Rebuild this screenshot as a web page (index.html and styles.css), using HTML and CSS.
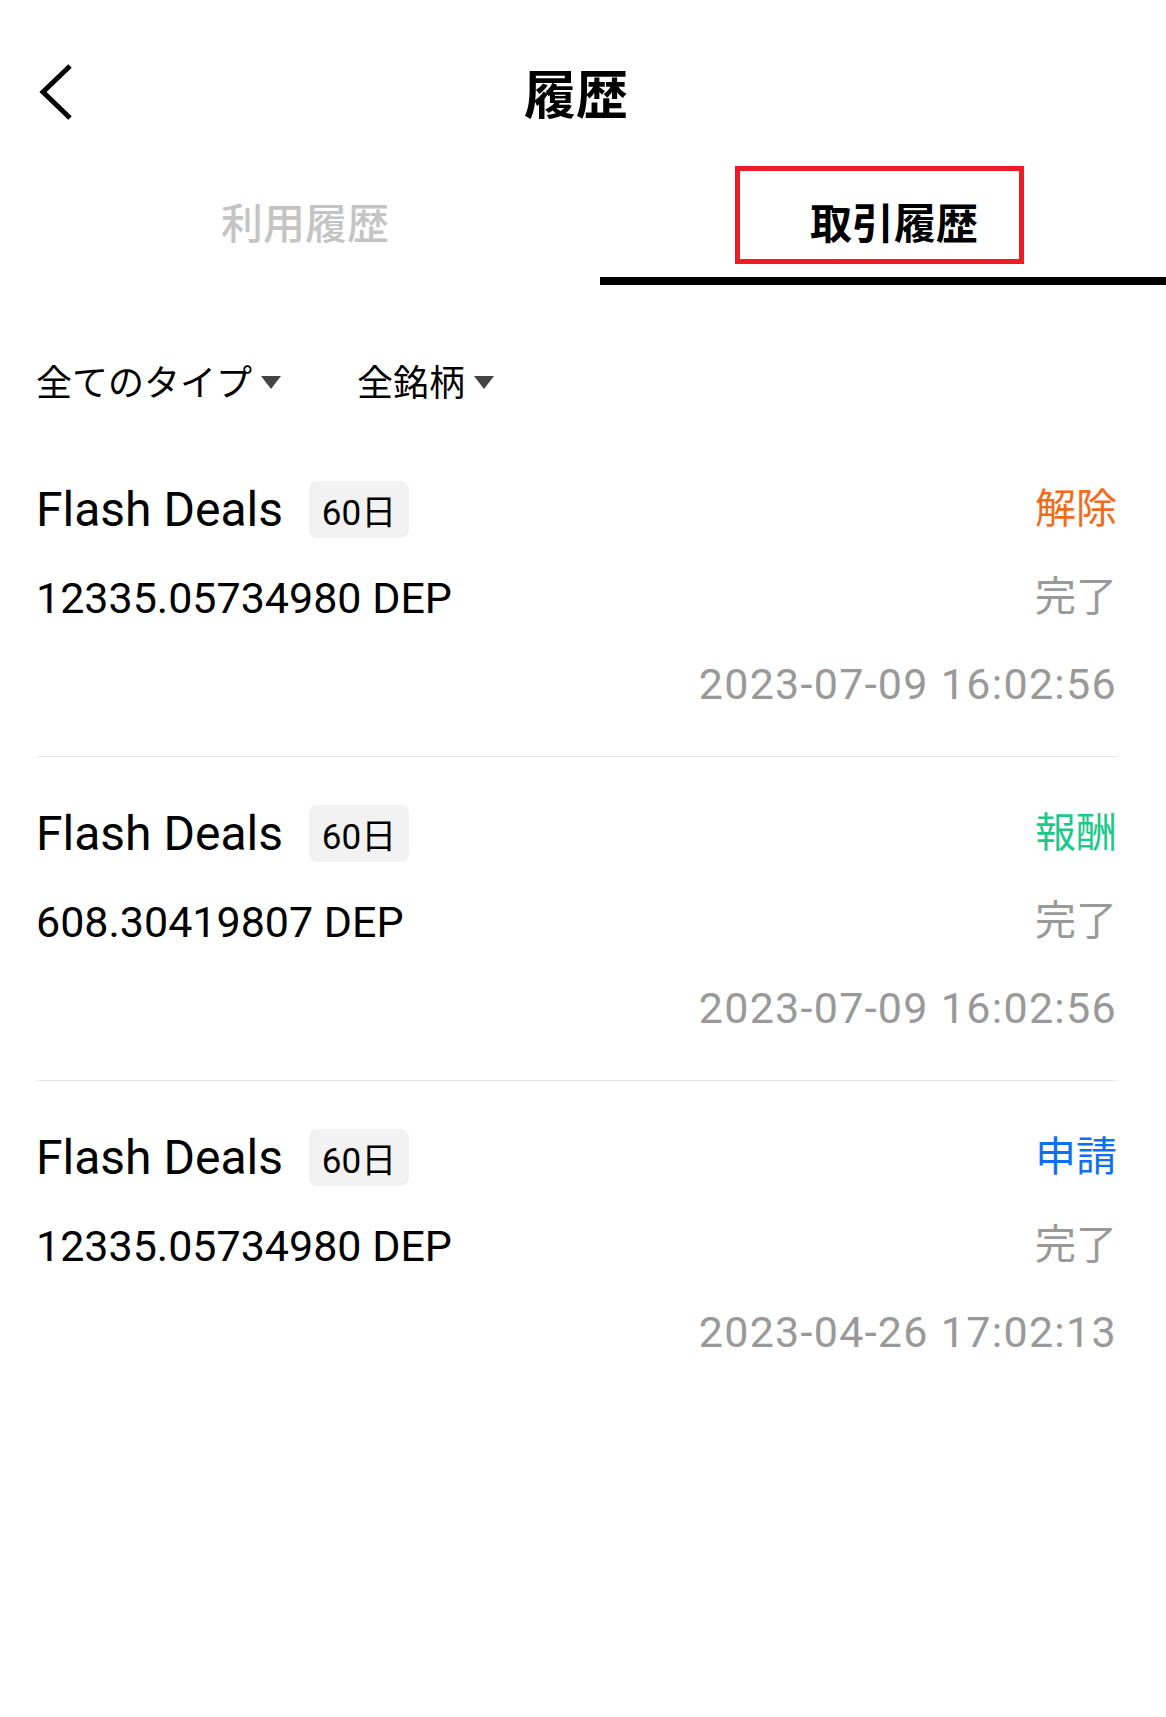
FILE: index.html
```html
<!DOCTYPE html>
<html lang="ja">
<head>
    <meta charset="UTF-8">
    <meta name="viewport" content="width=device-width, initial-scale=1.0">
    <title>履歴</title>
    <link rel="stylesheet" href="styles.css">
</head>
<body>
    <header class="top-bar">
        <a class="back-btn" href="#">
            <svg width="40" height="56" viewBox="0 0 40 56">
                <polyline points="34,2 7,28 34,54" fill="none" stroke="#000" stroke-width="5"/>
            </svg>
        </a>
        <h1>履歴</h1>
        <span></span>
    </header>

    <nav class="tabs">
        <div class="tab">利用履歴</div>
        <div class="tab active"><span class="tab-label">取引履歴</span></div>
    </nav>

    <div class="filters">
        <button class="filter">全てのタイプ<i class="caret"></i></button>
        <button class="filter">全銘柄<i class="caret"></i></button>
    </div>

    <div class="records">
        <div class="record">
            <div class="row">
                <div class="name">Flash Deals <span class="badge">60日</span></div>
                <span class="kind release">解除</span>
            </div>
            <div class="row">
                <span class="amount">12335.05734980 DEP</span>
                <span class="state">完了</span>
            </div>
            <div class="row date-row">
                <span class="date">2023-07-09 16:02:56</span>
            </div>
        </div>

        <div class="record">
            <div class="row">
                <div class="name">Flash Deals <span class="badge">60日</span></div>
                <span class="kind reward">報酬</span>
            </div>
            <div class="row">
                <span class="amount">608.30419807 DEP</span>
                <span class="state">完了</span>
            </div>
            <div class="row date-row">
                <span class="date">2023-07-09 16:02:56</span>
            </div>
        </div>

        <div class="record">
            <div class="row">
                <div class="name">Flash Deals <span class="badge">60日</span></div>
                <span class="kind apply">申請</span>
            </div>
            <div class="row">
                <span class="amount">12335.05734980 DEP</span>
                <span class="state">完了</span>
            </div>
            <div class="row date-row">
                <span class="date">2023-04-26 17:02:13</span>
            </div>
        </div>
    </div>
</body>
</html>
```

FILE: styles.css
```css
body {
    font-family: Roboto, 'Noto Sans CJK JP', sans-serif;
    background: #fff;
    color: #000;
    margin: 0;
    width: 1166px;
}

.top-bar {
    display: grid;
    grid-template-columns: 1fr auto 1fr;
    align-items: center;
    height: 144px;
    padding: 20px 50px 0 36px;
}

.back-btn {
    display: flex;
    align-items: center;
}

.top-bar h1 {
    margin: 0;
    font-family: 'Noto Sans CJK JP', sans-serif;
    font-size: 52px;
    font-weight: bold;
    line-height: 60px;
}

.tabs {
    display: flex;
}

.tab {
    width: 600px;
    height: 121px;
    padding-left: 10px;
    box-sizing: border-box;
    display: flex;
    align-items: center;
    justify-content: center;
    border-bottom: 8px solid transparent;
    font-family: 'Noto Sans CJK JP', sans-serif;
    font-size: 42px;
    line-height: 42px;
    color: #c4c4c4;
    font-weight: 500;
}

.tab.active {
    flex: 1;
    width: auto;
    padding-left: 22px;
    border-bottom-color: #000;
    color: #000;
    font-weight: bold;
}

.tab-label {
    position: relative;
}

/* red highlight frame around the active tab */
.tab-label::after {
    content: '';
    position: absolute;
    left: -75px;
    right: -46px;
    top: -34px;
    bottom: -22px;
    border: 5px solid #ee1c25;
}

.filters {
    display: flex;
    gap: 76px;
    height: 60px;
    margin: 65px 0 23px;
    padding: 0 36px;
    align-items: center;
}

.filter {
    display: flex;
    align-items: center;
    gap: 9px;
    padding: 0;
    border: none;
    background: none;
    font-family: 'Noto Sans CJK JP', sans-serif;
    font-size: 36px;
    color: #000;
}

.caret {
    width: 0;
    height: 0;
    border-left: 10.5px solid transparent;
    border-right: 10.5px solid transparent;
    border-top: 13px solid #444;
    margin-top: 4px;
}

.records {
    padding: 0 49px 0 36px;
}

.record {
    padding: 48px 0 47px;
    border-bottom: 1px solid #e8e8e8;
}

.record:last-child {
    border-bottom: none;
}

.row {
    display: flex;
    justify-content: space-between;
    align-items: center;
    height: 50px;
    margin-top: 36px;
}

.record .row:first-child {
    height: 57px;
    margin-top: 0;
}

.row:nth-child(2) {
    margin-top: 35px;
}

.date-row {
    justify-content: flex-end;
}

.name {
    display: flex;
    align-items: center;
    gap: 14px;
    font-size: 48px;
    white-space: pre;
}

.badge {
    display: flex;
    align-items: center;
    height: 57px;
    padding: 0 13px;
    background: #f2f2f2;
    border-radius: 8px;
    font-size: 35px;
}

.kind,
.state {
    font-family: 'Noto Sans CJK JP', sans-serif;
    font-size: 41px;
    margin-bottom: 10px;
}

.release { color: #f26a1b; }
.reward { color: #1dc98a; }
.apply { color: #0e6ff5; }

.state {
    color: #999;
}

.amount {
    font-size: 43px;
}

.date {
    font-size: 43px;
    letter-spacing: 1.3px;
    color: #999;
}
```
